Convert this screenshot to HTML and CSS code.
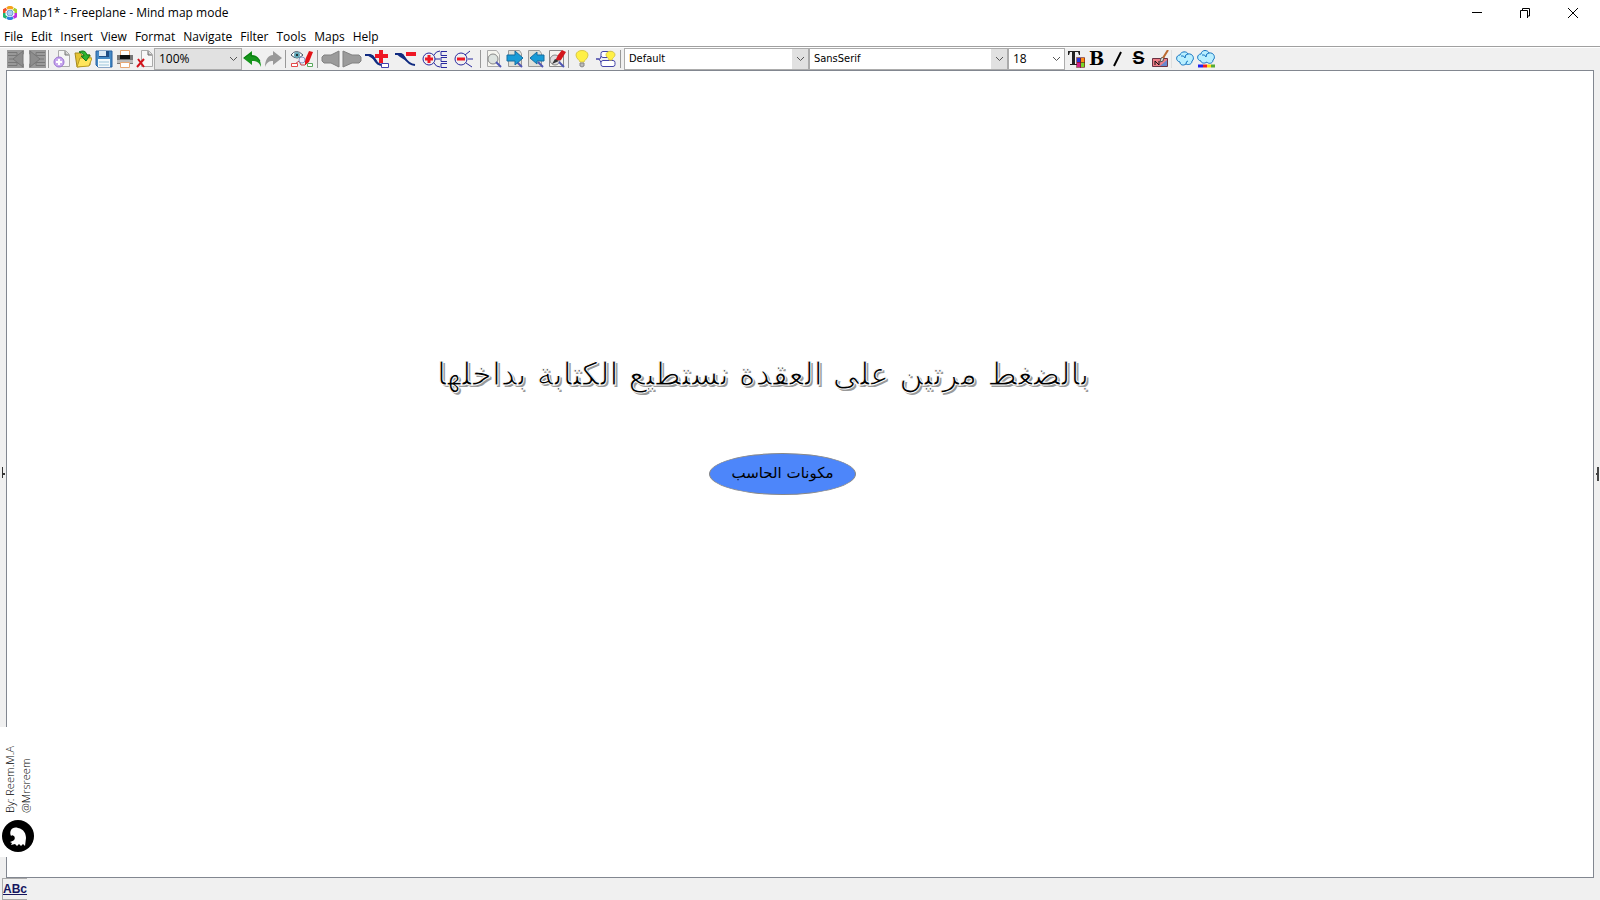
FILE: index.html
```html
<!DOCTYPE html>
<html lang="en">
<head>
    <meta charset="UTF-8">
    <meta name="viewport" content="width=device-width, initial-scale=1.0">
    <title>Map1* - Freeplane - Mind map mode</title>
    <link rel="stylesheet" href="styles.css">
</head>
<body>
    <header class="titlebar">
        <svg class="app-icon" width="14" height="14" viewBox="0 0 14 14" fill="none" stroke-width="3">
            <path d="M4 2.500 7 1l3 1.500" stroke="#f6a21b"/>
            <path d="M10.500 3 13 4.500v3" stroke="#a5cf2b"/>
            <path d="M13 7v3l-2.500 1.500" stroke="#c02fe0"/>
            <path d="M10 11.500 7 13l-3-1.500" stroke="#2d7fe0"/>
            <path d="M3.500 11.500 1 10V7" stroke="#1fb573"/>
            <path d="M1 7V4.500L3.500 3" stroke="#f0502c"/>
            <circle cx="7" cy="7" r="3" fill="#a8cdf2" stroke="#6d9ed4" stroke-width="1"/>
        </svg>
        <h1 class="title">Map1* - Freeplane - Mind map mode</h1>
        <div class="window-controls">
            <button type="button" aria-label="Minimize"><svg width="12" height="12" viewBox="0 0 12 12"><path d="M1 5.500h10"/></svg></button>
            <button type="button" aria-label="Restore"><svg width="12" height="12" viewBox="0 0 12 12"><path d="M1.500 11V3.500h7V11M3.500 3V1.500h7V9H9"/></svg></button>
            <button type="button" aria-label="Close"><svg width="12" height="12" viewBox="0 0 12 12"><path d="m1 1 10 10M11 1 1 11"/></svg></button>
        </div>
    </header>

    <nav class="menubar">
        <button type="button">File</button>
        <button type="button">Edit</button>
        <button type="button">Insert</button>
        <button type="button">View</button>
        <button type="button">Format</button>
        <button type="button">Navigate</button>
        <button type="button">Filter</button>
        <button type="button">Tools</button>
        <button type="button">Maps</button>
        <button type="button">Help</button>
    </nav>

    <div class="toolbar">
        <button type="button" class="tool" aria-label="Previous map"><svg width="18" height="18" viewBox="0 0 18 18"><path d="M0 0h17v4l-2 1v8l2 1v4H0z" fill="#999"/><path d="M1 2.500h9v3H1M1 12.500h9v3H1M2 9h5" stroke="#777" fill="none"/><path d="M16 1 6 9l10 8z" stroke="#777" fill="#8d8d8d"/></svg></button>
        <button type="button" class="tool" aria-label="Next map"><svg width="18" height="18" viewBox="0 0 18 18"><path d="M1 0h17v18H1v-4l2-1V5L1 4z" fill="#999"/><path d="M17 2.500H8v3h9M17 12.500H8v3h9M11 9h5" stroke="#777" fill="none"/><path d="m2 1 10 8-10 8z" stroke="#777" fill="#8d8d8d"/></svg></button>
        <span class="separator"></span>
        <button type="button" class="tool" aria-label="New map"><svg width="18" height="18" viewBox="0 0 18 18"><path d="M5.500.5h7l4 4v12h-11z" fill="#f5f5f5" stroke="#aaa"/><path d="M12 1v4h4" fill="#ccc" stroke="#777"/><circle cx="6" cy="12" r="5" fill="#c9a9ee" stroke="#9a73d2"/><path d="M6 9v6M3 12h6" stroke="#fff" stroke-width="2"/></svg></button>
        <button type="button" class="tool" aria-label="Open map"><svg width="18" height="18" viewBox="0 0 18 18"><path d="M1 3h5l2 2h8v10L3 17z" fill="#e5c334" stroke="#a68a1f"/><path d="m3 17 3-9h12l-3 8z" fill="#ffe55a" stroke="#b99b22"/><path d="M5 2c4-2 7-1 8 3h3l-4 6-5-5h3c0-2-2-3-5-4z" fill="#2eb42e" stroke="#14771b"/></svg></button>
        <button type="button" class="tool" aria-label="Save"><svg width="18" height="18" viewBox="0 0 18 18"><path d="M1 1h16v16H3l-2-2z" fill="#4489c5" stroke="#2860a0"/><path d="M4 1h10v6H4z" fill="#1f4d85"/><path d="M4 1h7v5H4z" fill="#dce9f5"/><path d="M3 9h12v8H3z" fill="#f4fafc"/><path d="M4 12h10M4 15h10" stroke="#9bc5da"/></svg></button>
        <button type="button" class="tool" aria-label="Print"><svg width="18" height="18" viewBox="0 0 18 18"><path d="M4.500.5h9v5h-9z" fill="#fff" stroke="#e7a875"/><path d="M1 5h16v9H1z" fill="#777"/><path d="M4 5h10v4H4z" fill="#111"/><path d="M1 10h16v3H1z" fill="#bbb"/><path d="M4.500 12.500h9v5h-9z" fill="#fff" stroke="#e7a875"/></svg></button>
        <button type="button" class="tool tool-close" aria-label="Close map"><svg width="18" height="18" viewBox="0 0 18 18"><path d="M5.500.5h7l4 4v12h-11z" fill="#f7f7f7" stroke="#aaa"/><path d="M12 1v4h4" fill="#ccc" stroke="#666"/><path d="m2 9 6 8M8 9l-7 8" stroke="#d3131b" stroke-width="2"/></svg></button>
        <select class="combo zoom" aria-label="Zoom"><option>100%</option></select>
        <button type="button" class="tool" aria-label="Undo"><svg width="19" height="18" viewBox="0 0 19 18"><path d="m0 8 9-7v4c6 0 9 5 9 12-2-5-5-6-9-6v4z" fill="#16951c"/><path d="m1 8 7-5v3c5 0 7 2 9 5" fill="none" stroke="#087b0e"/></svg></button>
        <button type="button" class="tool" aria-label="Redo"><svg width="19" height="18" viewBox="0 0 19 18"><path d="m18 8-9-7v4C4 5 1 10 1 17c2-5 4-6 8-6v4z" fill="#999"/></svg></button>
        <span class="separator"></span>
        <button type="button" class="tool tool-filter" aria-label="Edit filter"><svg width="24" height="18" viewBox="0 0 24 18"><path d="M1 5q5-7 12 0-6 6-12 0z" fill="#fff" stroke="#456"/><circle cx="7" cy="5" r="3" fill="#62a8b8"/><circle cx="7" cy="5" r="1" fill="#111"/><path d="m5 14 4-3 2 4h4l3-3" fill="none" stroke="#c23847"/><path d="m15 10 4-9 4 1-4 10-4 3z" fill="#e31318"/><path d="M1.500 13.500h6v3h-6z" fill="#fff" stroke="#e34949"/><path d="M17.500 13.500h5v3h-5z" fill="#fff" stroke="#59a85d"/><circle cx="12" cy="10" r="3" fill="#eef" stroke="#8699c4"/></svg></button>
        <span class="separator"></span>
        <button type="button" class="tool" aria-label="Back"><svg width="20" height="18" viewBox="0 0 20 18"><path d="m1 9 11-8h6v16h-6z" fill="none"/><path d="M18 1v16l-8-4H3l-2-2V7l2-2h7z" fill="#9b9b9b" stroke="#818181"/></svg></button>
        <button type="button" class="tool" aria-label="Forward"><svg width="20" height="18" viewBox="0 0 20 18"><path d="M1 1v16l9-4h7l2-2V7l-2-2h-7z" fill="#9b9b9b" stroke="#818181"/></svg></button>
        <button type="button" class="tool tool-child" aria-label="New child node"><svg width="25" height="18" viewBox="0 0 25 18"><path d="M0 5h5c5 1 4 10 12 10" fill="none" stroke="#102b80" stroke-width="2"/><path d="m0 4 8 1 5 7-8-5z" fill="#102b80"/><path d="M16 0v13M10 6h13" stroke="#ee1724" stroke-width="4"/><path d="M16.500 13.500h7v4h-7z" fill="#fff" stroke="#4141ad"/></svg></button>
        <button type="button" class="tool tool-delete" aria-label="Delete node"><svg width="24" height="18" viewBox="0 0 24 18"><path d="M1 4h6c4 1 4 10 14 11" fill="none" stroke="#102b80" stroke-width="2"/><path d="m1 3 8 1 5 8-8-5z" fill="#102b80"/><path d="M12 4h10" stroke="#ee1724" stroke-width="4"/></svg></button>
        <button type="button" class="tool tool-unfold" aria-label="Unfold"><svg width="26" height="18" viewBox="0 0 26 18" fill="none" stroke="#29299e"><circle cx="7" cy="9" r="6"/><path d="M12 5q2-4 6-4M13 9h5M12 13q2 4 6 4"/><path d="M25 1.500h-6v4h6M25 7.500h-6v4h6M25 13.500h-6v4h6"/><path d="M7 5v8M3 9h8" stroke="#ee1724" stroke-width="3"/></svg></button>
        <button type="button" class="tool tool-fold" aria-label="Fold"><svg width="22" height="18" viewBox="0 0 22 18" fill="none" stroke="#29299e"><circle cx="7" cy="9" r="6"/><path d="m11 5 5-4M14 9h5M12 13l6 4"/><path d="M3 9h8" stroke="#ee1724" stroke-width="3"/></svg></button>
        <span class="separator"></span>
        <button type="button" class="tool" aria-label="Find"><svg width="18" height="18" viewBox="0 0 18 18"><path d="M2.500.5h9l3 4v12h-12z" fill="#f4f4ee" stroke="#aaa"/><circle cx="8" cy="9" r="5" fill="#dde3df" stroke="#888"/><path d="m11 12 5 5" stroke="#4e55b4" stroke-width="2"/></svg></button>
        <button type="button" class="tool" aria-label="Find next"><svg width="18" height="18" viewBox="0 0 18 18"><path d="M2.500.5h11l2 3v13h-13z" fill="#e0e0d9" stroke="#999"/><path d="m11 12 5 5" stroke="#4e55b4" stroke-width="2"/><path d="M1 5h8V1l8 7-8 7v-4H1z" fill="#189bd7" stroke="#176c9f"/></svg></button>
        <button type="button" class="tool" aria-label="Find previous"><svg width="18" height="18" viewBox="0 0 18 18"><path d="M1.500.5h11l2 3v13h-13z" fill="#e0e0d9" stroke="#999"/><path d="m11 12 5 5" stroke="#4e55b4" stroke-width="2"/><path d="M17 5h-7V2L3 8l7 6v-3h7z" fill="#189bd7" stroke="#176c9f"/></svg></button>
        <button type="button" class="tool" aria-label="Quick filter"><svg width="18" height="18" viewBox="0 0 18 18"><path d="M1.500.5h12l2 3v13h-14z" fill="#f4f4ee" stroke="#888"/><circle cx="7" cy="10" r="5" fill="#ddd" stroke="#888"/><path d="m11 12 5 5" stroke="#4e55b4" stroke-width="2"/><path d="m7 11 3-6 4-5 4 2-5 8z" fill="#d3161c"/><path d="m4 14 3-5 4 2z" fill="#333"/></svg></button>
        <span class="separator"></span>
        <button type="button" class="tool tool-bulb" aria-label="Highlight"><svg width="14" height="18" viewBox="0 0 14 18"><path d="M5 12c0-2-4-3-4-7 0-6 12-6 12 0 0 4-4 5-4 7z" fill="#fff045" stroke="#d8c84b"/><path d="M5 13h4v3l-2 1-2-1z" fill="#bbb" stroke="#888"/></svg></button>
        <button type="button" class="tool tool-summary" aria-label="Highlight node"><svg width="22" height="18" viewBox="0 0 22 18" fill="#fff" stroke="#4444a8"><path d="M7 4 5 9H1h3l3 5" fill="none"/><rect x="6" y="1.500" width="12" height="6" rx="2"/><rect x="6" y="10.500" width="14" height="6" rx="2"/><path d="M14 10c0-2-3-3-3-5 0-5 9-5 9 0 0 2-3 3-3 5z" fill="#fff045" stroke="#d8c84b"/></svg></button>
        <span class="separator"></span>
        <select class="combo editable style" aria-label="Style"><option>Default</option></select>
        <select class="combo editable font" aria-label="Font"><option>SansSerif</option></select>
        <select class="combo size" aria-label="Font size"><option>18</option></select>
        <button type="button" class="tool" aria-label="Font color"><svg width="18" height="18" viewBox="0 0 18 18"><path d="M1 1h12v4h-1l-1-3H8v12h2v1H3v-1h2V2H3L2 5H1z" fill="#222"/><path d="M10 8h4v4h-4z" fill="#2737dc"/><path d="M14 8h4v4h-4z" fill="#ff8b12"/><path d="M10 12h4v5h-4z" fill="#d32188"/><path d="M14 12h4v5h-4z" fill="#78d727"/><path d="M9.500 7.500h8v10h-8zM10 12.500h8M13.500 8v10" fill="none" stroke="#611" stroke-opacity=".6"/></svg></button>
        <button type="button" class="tool letter" aria-label="Bold">B</button>
        <button type="button" class="tool" aria-label="Italic"><svg width="18" height="18" viewBox="0 0 18 18"><path d="M12 2 5 16" stroke="#000" stroke-width="2"/></svg></button>
        <button type="button" class="tool letter strike" aria-label="Strikethrough">S</button>
        <button type="button" class="tool" aria-label="Clear format"><svg width="18" height="18" viewBox="0 0 18 18"><path d="M1.500 8.500h15v8h-15z" fill="#ee7d86" stroke="#693343"/><path d="M9 16h7v-6z" fill="#6987ce"/><path d="M4 15v-4l4 4v-4" fill="none" stroke="#111"/><path d="m9 12 1-4 3-1-1 4z" fill="#ddd" stroke="#555"/><path d="m12 8 5-8" stroke="#bc6b31" stroke-width="2"/></svg></button>
        <span class="separator light"></span>
        <button type="button" class="tool" aria-label="Cloud"><svg width="18" height="18" viewBox="0 0 18 18"><path d="M4 12C-1 11 0 5 4 5c1-4 7-4 8-1 5-1 7 5 4 7 0 4-5 4-6 3-3 2-6 1-6-2z" fill="#b9efff" stroke="#1675c1"/><path d="M5 6q3-1 4 2 0-4 3-4M10 14q0-3 2-3" fill="none" stroke="#1675c1"/></svg></button>
        <button type="button" class="tool" aria-label="Cloud color"><svg width="18" height="18" viewBox="0 0 18 18"><path d="M4 11C-1 10 0 4 4 4c1-5 7-4 8-1 5-1 7 5 4 7 0 4-5 4-6 2-3 2-6 1-6-1z" fill="#b9efff" stroke="#1675c1"/><path d="M5 5q3-1 4 2 0-4 3-4" fill="none" stroke="#1675c1"/><path d="M1 16h5" stroke="#22e" stroke-width="3"/><path d="M6 16h4" stroke="#e22" stroke-width="3"/><path d="M10 16h4" stroke="#fd1" stroke-width="3"/><path d="M14 16h4" stroke="#5a3" stroke-width="3"/></svg></button>
    </div>

    <main class="workspace">
        <button type="button" class="splitter" aria-label="Show left panel"><svg width="5" height="14" viewBox="0 0 5 14"><path d="M2 0h1v6h2v2H3v3H2z" fill="#333"/></svg></button>
        <section class="map">
            <p class="caption" lang="ar" dir="rtl">بالضغط مرتين على العقدة نستطيع الكتابة بداخلها</p>
            <div class="node" lang="ar" dir="rtl">مكونات الحاسب</div>
        </section>
        <button type="button" class="splitter" aria-label="Show right panel"><svg width="5" height="16" viewBox="0 0 5 16"><path d="M4 1v14M2 8h2" stroke="#444" stroke-width="2"/></svg></button>
        <aside class="credit">
            <div class="credit-text">
                <p>By: Reem.M.A</p>
                <p>@Mrsreem</p>
            </div>
            <svg width="32" height="32" viewBox="0 0 32 32"><circle cx="16" cy="16" r="16"/><path d="M9 10c1-2 4-3 7-2 6 1 8 6 8 10l-1 8-2-2-2 2-2-2-2 2-2-2-4 1 1-2-2-1c4-1 6-3 4-6-2-1-2-1-3 0-1-2-1-4 0-6z" fill="#fff"/></svg>
        </aside>
    </main>

    <footer class="statusbar">
        <button type="button" class="spelling">ABc</button>
    </footer>
</body>
</html>
```
FILE: styles.css
```css
* {
    margin: 0;
    padding: 0;
    box-sizing: border-box;
}

body {
    display: flex;
    flex-direction: column;
    min-height: 100vh;
    background: #fff;
    color: #000;
    font-family: "Open Sans", "Noto Sans", sans-serif;
    font-size: 12px;
}

button {
    border: none;
    background: none;
    color: inherit;
    font: inherit;
}

.titlebar {
    display: flex;
    align-items: center;
    height: 25px;
    padding-right: 3px;
    padding-left: 3px;
}

.title {
    flex: 1;
    margin-left: 5px;
    font-size: 12px;
    font-weight: 400;
}

.window-controls {
    display: flex;
}

.window-controls button {
    width: 48px;
    height: 24px;
}

.window-controls svg {
    display: block;
    margin: 0 auto;
    fill: none;
    stroke: #000;
}

.menubar {
    display: flex;
    gap: 8px;
    height: 21px;
    padding-left: 4px;
    line-height: 24px;
}

.toolbar {
    display: flex;
    align-items: center;
    height: 24px;
    padding-left: 5px;
    border-top: 1px solid #a0a0a0;
    background: #f0f0f0;
    box-shadow: inset 0 1px #fff;
}

.tool {
    display: flex;
    flex: none;
    align-items: center;
    justify-content: center;
    width: 21px;
    height: 22px;
}

.tool-close {
    width: 19px;
}

.tool-filter {
    width: 28px;
}

.tool-child {
    width: 30px;
}

.tool-delete {
    width: 27px;
}

.tool-unfold {
    width: 31px;
}

.tool-fold {
    width: 29px;
}

.tool-bulb {
    width: 22px;
}

.tool-summary {
    width: 26px;
}

.letter {
    font-family: "DejaVu Serif", serif;
    font-size: 18px;
    font-weight: 700;
}

.strike {
    font-family: "Liberation Sans", sans-serif;
    text-decoration: line-through;
}

.separator {
    flex: none;
    width: 4px;
    height: 18px;
    background: linear-gradient(90deg, transparent 1px, #999 1px, #999 2px, transparent 2px);
}

.separator.light {
    opacity: 0.2;
}

.combo {
    flex: none;
    height: 22px;
    padding-left: 4px;
    border: 1px solid #acacac;
    border-radius: 0;
    appearance: none;
    background: url("data:image/svg+xml,%3Csvg xmlns='http://www.w3.org/2000/svg' width='9' height='6'%3E%3Cpath d='m1 1 3.5 3.5L8 1' fill='none' stroke='%23555'/%3E%3C/svg%3E") right 3px center no-repeat #fff;
    color: #000;
    font: inherit;
}

.zoom {
    width: 88px;
    background-color: #e1e1e1;
}

.editable {
    background-image: url("data:image/svg+xml,%3Csvg xmlns='http://www.w3.org/2000/svg' width='9' height='6'%3E%3Cpath d='m1 1 3.5 3.5L8 1' fill='none' stroke='%23555'/%3E%3C/svg%3E"), linear-gradient(#e1e1e1, #e1e1e1);
    background-position: right 3px center, right top;
    background-size: auto, 16px 100%;
}

.style {
    width: 185px;
    margin-left: 1px;
}

.font {
    width: 199px;
}

.style,
.font {
    font-family: "DejaVu Sans Condensed", "DejaVu Sans", sans-serif;
    font-size: 11px;
}

.size {
    width: 57px;
}

.workspace {
    position: relative;
    display: flex;
    flex: 1;
    background: #f0f0f0;
}

.splitter {
    display: flex;
    align-items: center;
    width: 6px;
}

.map {
    position: relative;
    flex: 1;
    border: 1px solid #828790;
    background: #fff;
}

.caption {
    position: absolute;
    top: 279px;
    left: 430px;
    color: #000;
    font-family: "DejaVu Sans", sans-serif;
    font-size: 32px;
    line-height: 48px;
    text-shadow: 2px 2px #999;
    -webkit-text-stroke: 1px #fff;
    white-space: nowrap;
}

.node {
    position: absolute;
    top: 382px;
    left: 702px;
    width: 147px;
    height: 42px;
    border: 1px solid #888;
    border-radius: 50%;
    background: #4d86fa;
    font-family: "DejaVu Sans", sans-serif;
    font-size: 15px;
    line-height: 38px;
    text-align: center;
}

.credit {
    position: absolute;
    bottom: 21px;
    left: 0;
    display: flex;
    flex-direction: column;
    align-items: center;
    justify-content: flex-end;
    gap: 7px;
    width: 36px;
    height: 130px;
    padding-bottom: 5px;
    background: #fff;
}

/* reads bottom to top, first line on the left */
.credit-text {
    writing-mode: vertical-rl;
    transform: rotate(180deg);
    font-size: 11px;
    font-weight: 300;
    line-height: 16px;
    white-space: nowrap;
}

.statusbar {
    display: flex;
    height: 22px;
    padding-left: 2px;
    background: #f0f0f0;
}

.spelling {
    width: 25px;
    border: 1px solid #aaa;
    border-right: none;
    color: #16165f;
    font-family: "Liberation Sans", sans-serif;
    font-size: 12px;
    font-weight: 700;
    line-height: 16px;
    text-decoration: underline;
}
```
